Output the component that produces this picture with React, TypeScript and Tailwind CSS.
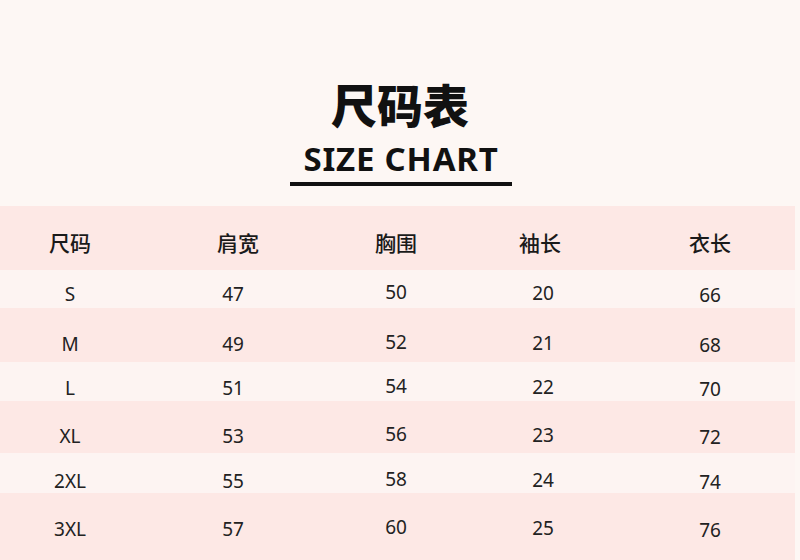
import React from "react";

const headers = ["尺码", "肩宽", "胸围", "袖长", "衣长"];
const rows = [
  ["S", "47", "50", "20", "66"],
  ["M", "49", "52", "21", "68"],
  ["L", "51", "54", "22", "70"],
  ["XL", "53", "56", "23", "72"],
  ["2XL", "55", "58", "24", "74"],
  ["3XL", "57", "60", "25", "76"],
];

const rowStyles = [
  "h-[38px] bg-[#fdf4f2] pt-[12px]",
  "h-[54px] bg-[#fde8e5] pt-[24px]",
  "h-[39px] bg-[#fdf4f2] pt-[14px]",
  "h-[52px] bg-[#fde8e5] pt-[23px]",
  "h-[40px] bg-[#fdf4f2] pt-[16px]",
  "h-[67px] bg-[#fde8e5] pt-[24px]",
];

const cols = "grid grid-cols-[140px_186px_140px_154px_175px]";

export default function App() {
  return (
    <div
      className="w-[800px] h-[560px] overflow-hidden bg-[#fdf7f4] flex flex-col"
      style={{ fontFamily: '"Noto Sans", "Noto Sans CJK SC", sans-serif' }}
    >
      <div className="h-[206px] flex flex-col items-center pt-[80px]">
        <div
          className="text-[46px] leading-[46px] font-black text-[#111]"
          style={{ fontFamily: '"Noto Sans CJK SC", sans-serif' }}
        >
          尺码表
        </div>
        <div className="mt-[16px] ml-[2px] text-[33px] leading-[33px] font-bold tracking-[0.8px] text-[#111]">
          SIZE CHART
        </div>
        <div className="mt-[7px] ml-[2px] w-[222px] h-[4px] bg-[#111]" />
      </div>
      <div className="w-[795px] flex flex-col">
        <div className={`${cols} h-[64px] bg-[#fde8e5] pt-[23px]`}>
          {headers.map((h, i) => (
            <div
              key={h}
              className={`text-center text-[21px] leading-[26px] font-medium text-[#1a1a1a] ${
                i === 1 ? "pl-[10px]" : i === 3 ? "pr-[6px]" : i === 4 ? "pl-[5px]" : ""
              }`}
              style={{ fontFamily: '"Noto Sans CJK SC", sans-serif' }}
            >
              {h}
            </div>
          ))}
        </div>
        {rows.map((r, ri) => (
          <div key={r[0]} className={`${cols} ${rowStyles[ri]}`}>
            {r.map((v, i) => (
              <div
                key={i}
                className={`text-center text-[19px] leading-[24px] text-[#222] ${
                  i === 2 ? "-mt-[2px]" : i === 4 ? "mt-[1px] pl-[5px]" : i === 3 ? "-mt-[1px]" : ""
                }`}
              >
                {v}
              </div>
            ))}
          </div>
        ))}
      </div>
    </div>
  );
}
